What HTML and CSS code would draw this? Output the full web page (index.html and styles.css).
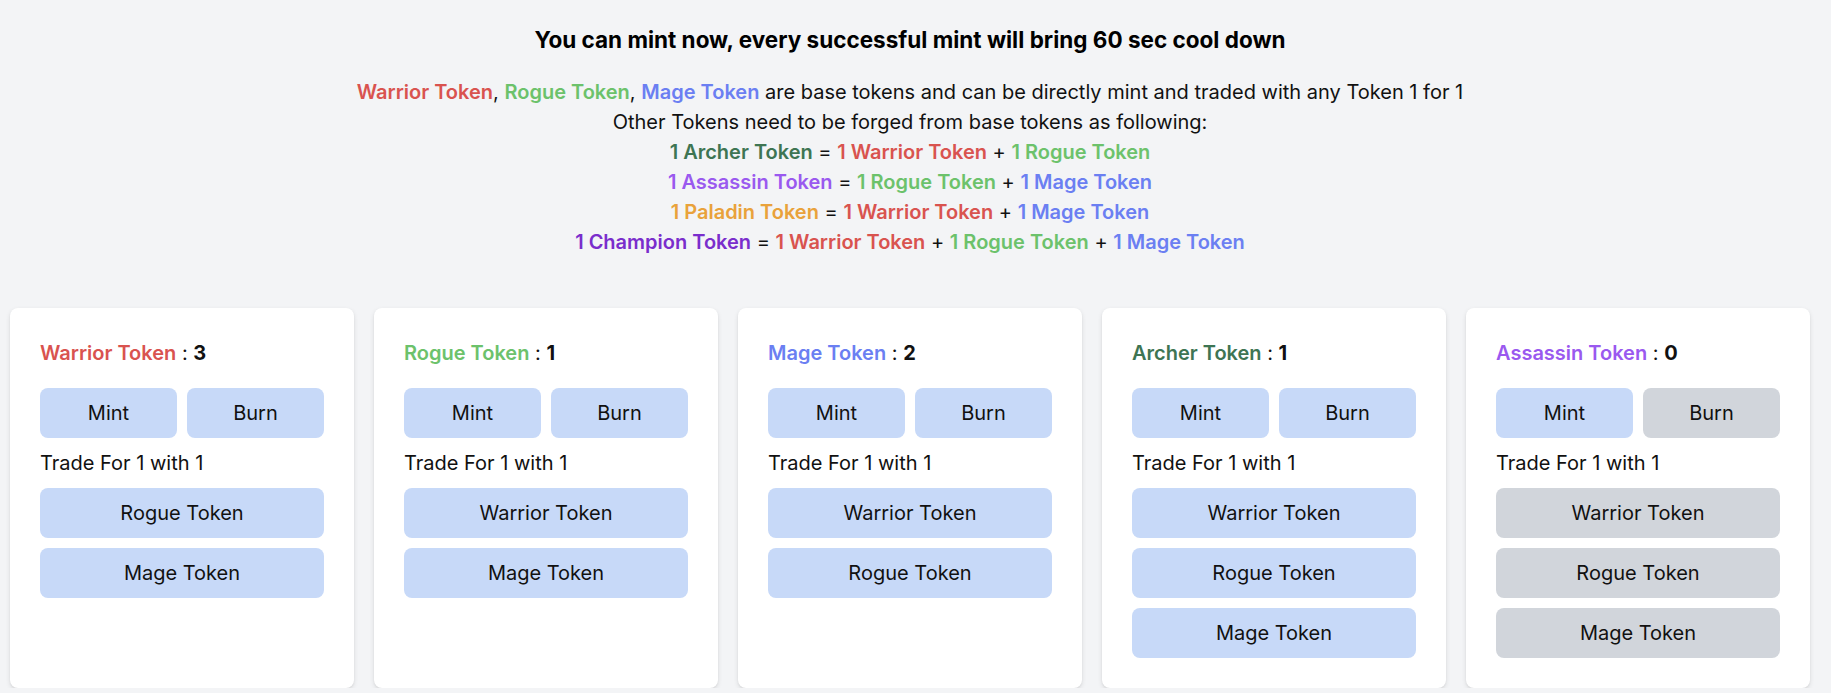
FILE: index.html
```html
<!DOCTYPE html>
<html>
<head>
<meta charset="utf-8">
<link rel="stylesheet" href="styles.css">
</head>
<body>
<div class="page">
<header class="intro">
  <h1 class="headline">You can mint now, every successful mint will bring 60 sec cool down</h1>
  <div class="rules">
    <p><span class="t warrior">Warrior Token</span>, <span class="t rogue">Rogue Token</span>, <span class="t mage">Mage Token</span> are base tokens and can be directly mint and traded with any Token 1 for 1</p>
    <p>Other Tokens need to be forged from base tokens as following:</p>
    <p><span class="t archer">1 Archer Token</span> = <span class="t warrior">1 Warrior Token</span> + <span class="t rogue">1 Rogue Token</span></p>
    <p><span class="t assassin">1 Assassin Token</span> = <span class="t rogue">1 Rogue Token</span> + <span class="t mage">1 Mage Token</span></p>
    <p><span class="t paladin">1 Paladin Token</span> = <span class="t warrior">1 Warrior Token</span> + <span class="t mage">1 Mage Token</span></p>
    <p><span class="t champion">1 Champion Token</span> = <span class="t warrior">1 Warrior Token</span> + <span class="t rogue">1 Rogue Token</span> + <span class="t mage">1 Mage Token</span></p>
  </div>
</header>

<main class="cards">
  <section class="card">
    <div class="card-title"><span class="t warrior">Warrior Token</span> : <b>3</b></div>
    <div class="row"><button class="btn">Mint</button><button class="btn">Burn</button></div>
    <div class="trade-label">Trade For 1 with 1</div>
    <div class="stack">
      <button class="btn">Rogue Token</button>
      <button class="btn">Mage Token</button>
    </div>
  </section>

  <section class="card">
    <div class="card-title"><span class="t rogue">Rogue Token</span> : <b>1</b></div>
    <div class="row"><button class="btn">Mint</button><button class="btn">Burn</button></div>
    <div class="trade-label">Trade For 1 with 1</div>
    <div class="stack">
      <button class="btn">Warrior Token</button>
      <button class="btn">Mage Token</button>
    </div>
  </section>

  <section class="card">
    <div class="card-title"><span class="t mage">Mage Token</span> : <b>2</b></div>
    <div class="row"><button class="btn">Mint</button><button class="btn">Burn</button></div>
    <div class="trade-label">Trade For 1 with 1</div>
    <div class="stack">
      <button class="btn">Warrior Token</button>
      <button class="btn">Rogue Token</button>
    </div>
  </section>

  <section class="card">
    <div class="card-title"><span class="t archer">Archer Token</span> : <b>1</b></div>
    <div class="row"><button class="btn">Mint</button><button class="btn">Burn</button></div>
    <div class="trade-label">Trade For 1 with 1</div>
    <div class="stack">
      <button class="btn">Warrior Token</button>
      <button class="btn">Rogue Token</button>
      <button class="btn">Mage Token</button>
    </div>
  </section>

  <section class="card">
    <div class="card-title"><span class="t assassin">Assassin Token</span> : <b>0</b></div>
    <div class="row"><button class="btn">Mint</button><button class="btn disabled">Burn</button></div>
    <div class="trade-label">Trade For 1 with 1</div>
    <div class="stack">
      <button class="btn disabled">Warrior Token</button>
      <button class="btn disabled">Rogue Token</button>
      <button class="btn disabled">Mage Token</button>
    </div>
  </section>
</main>
</div>
</body>
</html>
```

FILE: styles.css
```css
* { box-sizing: border-box; }

body {
  margin: 0;
  background: #f3f4f6;
  font-family: Inter, "Noto Sans", sans-serif;
  color: #111;
}

.page {
  width: 1820px;
}

.intro {
  padding-top: 25px;
  text-align: center;
}

.headline {
  margin: 0 0 22px;
  font-size: 22.5px;
  line-height: 30px;
  font-weight: 700;
  color: #000;
}

.rules {
  font-size: 20px;
  line-height: 30px;
}

.rules p { margin: 0; }

.t { font-weight: 600; }
.warrior { color: #d9534f; }
.rogue { color: #6cc26b; }
.mage { color: #6b7ff2; }
.archer { color: #3e7553; }
.assassin { color: #9a59ef; }
.paladin { color: #e9a23b; }
.champion { color: #7a2dcc; }

.cards {
  margin-top: 51px;
  padding: 0 10px;
  display: grid;
  grid-template-columns: repeat(5, 1fr);
  gap: 20px;
}

.card {
  background: #fff;
  border-radius: 8px;
  padding: 30px;
  box-shadow: 0 2px 5px rgba(0, 0, 0, 0.1), 0 1px 2px rgba(0, 0, 0, 0.05);
  display: flex;
  flex-direction: column;
}

.card-title {
  font-size: 20px;
  line-height: 30px;
  margin-bottom: 20px;
}

.card-title b { font-weight: 700; }

.row {
  display: flex;
  gap: 10px;
}

.row .btn { flex: 1; }

.btn {
  height: 50px;
  border: 0;
  border-radius: 8px;
  background: #c7d9f8;
  font-family: inherit;
  font-size: 20px;
  color: #111;
  padding: 0;
}

.btn.disabled { background: #d1d5db; }

.trade-label {
  font-size: 20px;
  line-height: 30px;
  margin: 10px 0;
}

.stack {
  display: flex;
  flex-direction: column;
  gap: 10px;
}
```
